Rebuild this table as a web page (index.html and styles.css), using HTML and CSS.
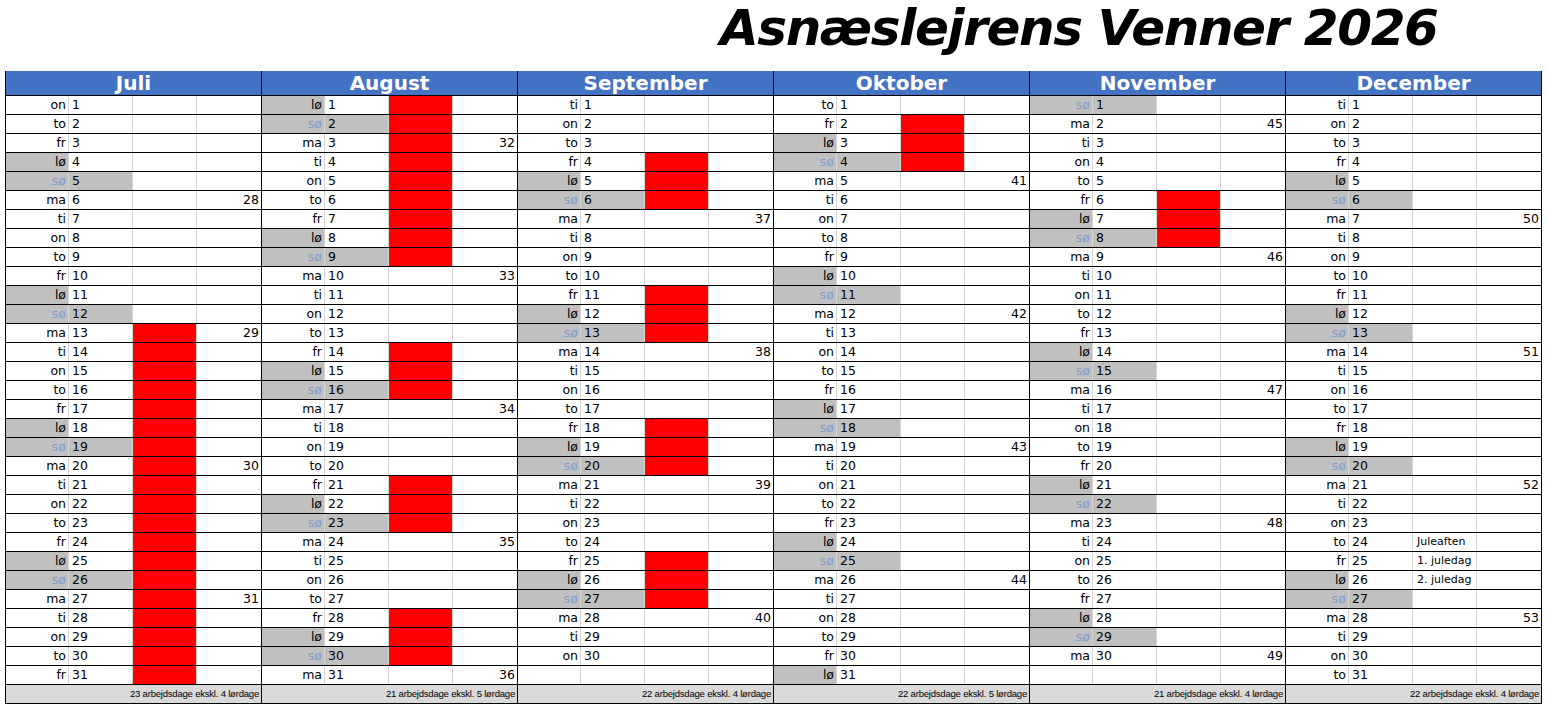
FILE: index.html
```html
<!DOCTYPE html>
<html lang="da">
<head>
<meta charset="utf-8">
<title>Asnæslejrens Venner 2026</title>
<link rel="stylesheet" href="styles.css">
</head>
<body>
<div class="title">Asnæslejrens Venner 2026</div>
<div class="cal">
<div class="m">
<div class="h">Juli</div>
<div class="r"><span>on</span><span>1</span><span></span><span></span></div>
<div class="r"><span>to</span><span>2</span><span></span><span></span></div>
<div class="r"><span>fr</span><span>3</span><span></span><span></span></div>
<div class="r sat"><span>lø</span><span>4</span><span></span><span></span></div>
<div class="r sun"><span>sø</span><span>5</span><span></span><span></span></div>
<div class="r"><span>ma</span><span>6</span><span></span><span>28</span></div>
<div class="r"><span>ti</span><span>7</span><span></span><span></span></div>
<div class="r"><span>on</span><span>8</span><span></span><span></span></div>
<div class="r"><span>to</span><span>9</span><span></span><span></span></div>
<div class="r"><span>fr</span><span>10</span><span></span><span></span></div>
<div class="r sat"><span>lø</span><span>11</span><span></span><span></span></div>
<div class="r sun"><span>sø</span><span>12</span><span></span><span></span></div>
<div class="r"><span>ma</span><span>13</span><span class="red"></span><span>29</span></div>
<div class="r"><span>ti</span><span>14</span><span class="red"></span><span></span></div>
<div class="r"><span>on</span><span>15</span><span class="red"></span><span></span></div>
<div class="r"><span>to</span><span>16</span><span class="red"></span><span></span></div>
<div class="r"><span>fr</span><span>17</span><span class="red"></span><span></span></div>
<div class="r sat"><span>lø</span><span>18</span><span class="red"></span><span></span></div>
<div class="r sun"><span>sø</span><span>19</span><span class="red"></span><span></span></div>
<div class="r"><span>ma</span><span>20</span><span class="red"></span><span>30</span></div>
<div class="r"><span>ti</span><span>21</span><span class="red"></span><span></span></div>
<div class="r"><span>on</span><span>22</span><span class="red"></span><span></span></div>
<div class="r"><span>to</span><span>23</span><span class="red"></span><span></span></div>
<div class="r"><span>fr</span><span>24</span><span class="red"></span><span></span></div>
<div class="r sat"><span>lø</span><span>25</span><span class="red"></span><span></span></div>
<div class="r sun"><span>sø</span><span>26</span><span class="red"></span><span></span></div>
<div class="r"><span>ma</span><span>27</span><span class="red"></span><span>31</span></div>
<div class="r"><span>ti</span><span>28</span><span class="red"></span><span></span></div>
<div class="r"><span>on</span><span>29</span><span class="red"></span><span></span></div>
<div class="r"><span>to</span><span>30</span><span class="red"></span><span></span></div>
<div class="r"><span>fr</span><span>31</span><span class="red"></span><span></span></div>
<div class="f">23 arbejdsdage ekskl. 4 lørdage</div>
</div>
<div class="m">
<div class="h">August</div>
<div class="r sat"><span>lø</span><span>1</span><span class="red"></span><span></span></div>
<div class="r sun"><span>sø</span><span>2</span><span class="red"></span><span></span></div>
<div class="r"><span>ma</span><span>3</span><span class="red"></span><span>32</span></div>
<div class="r"><span>ti</span><span>4</span><span class="red"></span><span></span></div>
<div class="r"><span>on</span><span>5</span><span class="red"></span><span></span></div>
<div class="r"><span>to</span><span>6</span><span class="red"></span><span></span></div>
<div class="r"><span>fr</span><span>7</span><span class="red"></span><span></span></div>
<div class="r sat"><span>lø</span><span>8</span><span class="red"></span><span></span></div>
<div class="r sun"><span>sø</span><span>9</span><span class="red"></span><span></span></div>
<div class="r"><span>ma</span><span>10</span><span></span><span>33</span></div>
<div class="r"><span>ti</span><span>11</span><span></span><span></span></div>
<div class="r"><span>on</span><span>12</span><span></span><span></span></div>
<div class="r"><span>to</span><span>13</span><span></span><span></span></div>
<div class="r"><span>fr</span><span>14</span><span class="red"></span><span></span></div>
<div class="r sat"><span>lø</span><span>15</span><span class="red"></span><span></span></div>
<div class="r sun"><span>sø</span><span>16</span><span class="red"></span><span></span></div>
<div class="r"><span>ma</span><span>17</span><span></span><span>34</span></div>
<div class="r"><span>ti</span><span>18</span><span></span><span></span></div>
<div class="r"><span>on</span><span>19</span><span></span><span></span></div>
<div class="r"><span>to</span><span>20</span><span></span><span></span></div>
<div class="r"><span>fr</span><span>21</span><span class="red"></span><span></span></div>
<div class="r sat"><span>lø</span><span>22</span><span class="red"></span><span></span></div>
<div class="r sun"><span>sø</span><span>23</span><span class="red"></span><span></span></div>
<div class="r"><span>ma</span><span>24</span><span></span><span>35</span></div>
<div class="r"><span>ti</span><span>25</span><span></span><span></span></div>
<div class="r"><span>on</span><span>26</span><span></span><span></span></div>
<div class="r"><span>to</span><span>27</span><span></span><span></span></div>
<div class="r"><span>fr</span><span>28</span><span class="red"></span><span></span></div>
<div class="r sat"><span>lø</span><span>29</span><span class="red"></span><span></span></div>
<div class="r sun"><span>sø</span><span>30</span><span class="red"></span><span></span></div>
<div class="r"><span>ma</span><span>31</span><span></span><span>36</span></div>
<div class="f">21 arbejdsdage ekskl. 5 lørdage</div>
</div>
<div class="m">
<div class="h">September</div>
<div class="r"><span>ti</span><span>1</span><span></span><span></span></div>
<div class="r"><span>on</span><span>2</span><span></span><span></span></div>
<div class="r"><span>to</span><span>3</span><span></span><span></span></div>
<div class="r"><span>fr</span><span>4</span><span class="red"></span><span></span></div>
<div class="r sat"><span>lø</span><span>5</span><span class="red"></span><span></span></div>
<div class="r sun"><span>sø</span><span>6</span><span class="red"></span><span></span></div>
<div class="r"><span>ma</span><span>7</span><span></span><span>37</span></div>
<div class="r"><span>ti</span><span>8</span><span></span><span></span></div>
<div class="r"><span>on</span><span>9</span><span></span><span></span></div>
<div class="r"><span>to</span><span>10</span><span></span><span></span></div>
<div class="r"><span>fr</span><span>11</span><span class="red"></span><span></span></div>
<div class="r sat"><span>lø</span><span>12</span><span class="red"></span><span></span></div>
<div class="r sun"><span>sø</span><span>13</span><span class="red"></span><span></span></div>
<div class="r"><span>ma</span><span>14</span><span></span><span>38</span></div>
<div class="r"><span>ti</span><span>15</span><span></span><span></span></div>
<div class="r"><span>on</span><span>16</span><span></span><span></span></div>
<div class="r"><span>to</span><span>17</span><span></span><span></span></div>
<div class="r"><span>fr</span><span>18</span><span class="red"></span><span></span></div>
<div class="r sat"><span>lø</span><span>19</span><span class="red"></span><span></span></div>
<div class="r sun"><span>sø</span><span>20</span><span class="red"></span><span></span></div>
<div class="r"><span>ma</span><span>21</span><span></span><span>39</span></div>
<div class="r"><span>ti</span><span>22</span><span></span><span></span></div>
<div class="r"><span>on</span><span>23</span><span></span><span></span></div>
<div class="r"><span>to</span><span>24</span><span></span><span></span></div>
<div class="r"><span>fr</span><span>25</span><span class="red"></span><span></span></div>
<div class="r sat"><span>lø</span><span>26</span><span class="red"></span><span></span></div>
<div class="r sun"><span>sø</span><span>27</span><span class="red"></span><span></span></div>
<div class="r"><span>ma</span><span>28</span><span></span><span>40</span></div>
<div class="r"><span>ti</span><span>29</span><span></span><span></span></div>
<div class="r"><span>on</span><span>30</span><span></span><span></span></div>
<div class="r"><span></span><span></span><span></span><span></span></div>
<div class="f">22 arbejdsdage ekskl. 4 lørdage</div>
</div>
<div class="m">
<div class="h">Oktober</div>
<div class="r"><span>to</span><span>1</span><span></span><span></span></div>
<div class="r"><span>fr</span><span>2</span><span class="red"></span><span></span></div>
<div class="r sat"><span>lø</span><span>3</span><span class="red"></span><span></span></div>
<div class="r sun"><span>sø</span><span>4</span><span class="red"></span><span></span></div>
<div class="r"><span>ma</span><span>5</span><span></span><span>41</span></div>
<div class="r"><span>ti</span><span>6</span><span></span><span></span></div>
<div class="r"><span>on</span><span>7</span><span></span><span></span></div>
<div class="r"><span>to</span><span>8</span><span></span><span></span></div>
<div class="r"><span>fr</span><span>9</span><span></span><span></span></div>
<div class="r sat"><span>lø</span><span>10</span><span></span><span></span></div>
<div class="r sun"><span>sø</span><span>11</span><span></span><span></span></div>
<div class="r"><span>ma</span><span>12</span><span></span><span>42</span></div>
<div class="r"><span>ti</span><span>13</span><span></span><span></span></div>
<div class="r"><span>on</span><span>14</span><span></span><span></span></div>
<div class="r"><span>to</span><span>15</span><span></span><span></span></div>
<div class="r"><span>fr</span><span>16</span><span></span><span></span></div>
<div class="r sat"><span>lø</span><span>17</span><span></span><span></span></div>
<div class="r sun"><span>sø</span><span>18</span><span></span><span></span></div>
<div class="r"><span>ma</span><span>19</span><span></span><span>43</span></div>
<div class="r"><span>ti</span><span>20</span><span></span><span></span></div>
<div class="r"><span>on</span><span>21</span><span></span><span></span></div>
<div class="r"><span>to</span><span>22</span><span></span><span></span></div>
<div class="r"><span>fr</span><span>23</span><span></span><span></span></div>
<div class="r sat"><span>lø</span><span>24</span><span></span><span></span></div>
<div class="r sun"><span>sø</span><span>25</span><span></span><span></span></div>
<div class="r"><span>ma</span><span>26</span><span></span><span>44</span></div>
<div class="r"><span>ti</span><span>27</span><span></span><span></span></div>
<div class="r"><span>on</span><span>28</span><span></span><span></span></div>
<div class="r"><span>to</span><span>29</span><span></span><span></span></div>
<div class="r"><span>fr</span><span>30</span><span></span><span></span></div>
<div class="r sat"><span>lø</span><span>31</span><span></span><span></span></div>
<div class="f">22 arbejdsdage ekskl. 5 lørdage</div>
</div>
<div class="m">
<div class="h">November</div>
<div class="r sun"><span>sø</span><span>1</span><span></span><span></span></div>
<div class="r"><span>ma</span><span>2</span><span></span><span>45</span></div>
<div class="r"><span>ti</span><span>3</span><span></span><span></span></div>
<div class="r"><span>on</span><span>4</span><span></span><span></span></div>
<div class="r"><span>to</span><span>5</span><span></span><span></span></div>
<div class="r"><span>fr</span><span>6</span><span class="red"></span><span></span></div>
<div class="r sat"><span>lø</span><span>7</span><span class="red"></span><span></span></div>
<div class="r sun"><span>sø</span><span>8</span><span class="red"></span><span></span></div>
<div class="r"><span>ma</span><span>9</span><span></span><span>46</span></div>
<div class="r"><span>ti</span><span>10</span><span></span><span></span></div>
<div class="r"><span>on</span><span>11</span><span></span><span></span></div>
<div class="r"><span>to</span><span>12</span><span></span><span></span></div>
<div class="r"><span>fr</span><span>13</span><span></span><span></span></div>
<div class="r sat"><span>lø</span><span>14</span><span></span><span></span></div>
<div class="r sun"><span>sø</span><span>15</span><span></span><span></span></div>
<div class="r"><span>ma</span><span>16</span><span></span><span>47</span></div>
<div class="r"><span>ti</span><span>17</span><span></span><span></span></div>
<div class="r"><span>on</span><span>18</span><span></span><span></span></div>
<div class="r"><span>to</span><span>19</span><span></span><span></span></div>
<div class="r"><span>fr</span><span>20</span><span></span><span></span></div>
<div class="r sat"><span>lø</span><span>21</span><span></span><span></span></div>
<div class="r sun"><span>sø</span><span>22</span><span></span><span></span></div>
<div class="r"><span>ma</span><span>23</span><span></span><span>48</span></div>
<div class="r"><span>ti</span><span>24</span><span></span><span></span></div>
<div class="r"><span>on</span><span>25</span><span></span><span></span></div>
<div class="r"><span>to</span><span>26</span><span></span><span></span></div>
<div class="r"><span>fr</span><span>27</span><span></span><span></span></div>
<div class="r sat"><span>lø</span><span>28</span><span></span><span></span></div>
<div class="r sun"><span>sø</span><span>29</span><span></span><span></span></div>
<div class="r"><span>ma</span><span>30</span><span></span><span>49</span></div>
<div class="r"><span></span><span></span><span></span><span></span></div>
<div class="f">21 arbejdsdage ekskl. 4 lørdage</div>
</div>
<div class="m">
<div class="h">December</div>
<div class="r"><span>ti</span><span>1</span><span></span><span></span></div>
<div class="r"><span>on</span><span>2</span><span></span><span></span></div>
<div class="r"><span>to</span><span>3</span><span></span><span></span></div>
<div class="r"><span>fr</span><span>4</span><span></span><span></span></div>
<div class="r sat"><span>lø</span><span>5</span><span></span><span></span></div>
<div class="r sun"><span>sø</span><span>6</span><span></span><span></span></div>
<div class="r"><span>ma</span><span>7</span><span></span><span>50</span></div>
<div class="r"><span>ti</span><span>8</span><span></span><span></span></div>
<div class="r"><span>on</span><span>9</span><span></span><span></span></div>
<div class="r"><span>to</span><span>10</span><span></span><span></span></div>
<div class="r"><span>fr</span><span>11</span><span></span><span></span></div>
<div class="r sat"><span>lø</span><span>12</span><span></span><span></span></div>
<div class="r sun"><span>sø</span><span>13</span><span></span><span></span></div>
<div class="r"><span>ma</span><span>14</span><span></span><span>51</span></div>
<div class="r"><span>ti</span><span>15</span><span></span><span></span></div>
<div class="r"><span>on</span><span>16</span><span></span><span></span></div>
<div class="r"><span>to</span><span>17</span><span></span><span></span></div>
<div class="r"><span>fr</span><span>18</span><span></span><span></span></div>
<div class="r sat"><span>lø</span><span>19</span><span></span><span></span></div>
<div class="r sun"><span>sø</span><span>20</span><span></span><span></span></div>
<div class="r"><span>ma</span><span>21</span><span></span><span>52</span></div>
<div class="r"><span>ti</span><span>22</span><span></span><span></span></div>
<div class="r"><span>on</span><span>23</span><span></span><span></span></div>
<div class="r"><span>to</span><span>24</span><span class="note">Juleaften</span><span></span></div>
<div class="r"><span>fr</span><span>25</span><span class="note">1. juledag</span><span></span></div>
<div class="r sat"><span>lø</span><span>26</span><span class="note">2. juledag</span><span></span></div>
<div class="r sun"><span>sø</span><span>27</span><span></span><span></span></div>
<div class="r"><span>ma</span><span>28</span><span></span><span>53</span></div>
<div class="r"><span>ti</span><span>29</span><span></span><span></span></div>
<div class="r"><span>on</span><span>30</span><span></span><span></span></div>
<div class="r"><span>to</span><span>31</span><span></span><span></span></div>
<div class="f">22 arbejdsdage ekskl. 4 lørdage</div>
</div>
</div>
</body>
</html>
```
FILE: styles.css
```css
body {
  margin: 0;
  background: #fff;
  color: #000;
  font-family: "DejaVu Sans", Verdana, sans-serif;
}
.title {
  height: 71px;
  box-sizing: border-box;
  padding-left: 720px;
  font-family: "DejaVu Sans", Verdana, sans-serif;
  font-weight: bold;
  font-style: oblique;
  font-size: 50px;
  line-height: 56px;
  letter-spacing: -1.4px;
  white-space: nowrap;
}
.cal {
  display: flex;
  margin-left: 5px;
  border-left: 1px solid #000;
  width: max-content;
}
.m {
  width: 256px;
  box-sizing: border-box;
  border-right: 1px solid #000;
}
.h {
  height: 25px;
  box-sizing: border-box;
  background: #4472c4;
  color: #fff;
  font-weight: bold;
  font-size: 20px;
  line-height: 24px;
  text-align: center;
  border-bottom: 1px solid #000;
}
.r {
  display: flex;
  height: 19px;
  box-sizing: border-box;
  border-bottom: 1px solid #000;
  font-size: 12.5px;
  line-height: 18px;
}
.r span {
  box-sizing: border-box;
  height: 18px;
  border-right: 1px solid #d4d4d4;
  white-space: nowrap;
  overflow: hidden;
}
.r span:nth-child(1) {
  width: 63px;
  text-align: right;
  padding-right: 2px;
}
.r span:nth-child(2) {
  width: 64px;
  padding-left: 3px;
}
.r span:nth-child(3) {
  width: 64px;
}
.r span:nth-child(4) {
  width: 64px;
  border-right: 0;
  text-align: right;
  padding-right: 2px;
}
.sat span:nth-child(1),
.sun span:nth-child(1),
.sun span:nth-child(2) {
  background: #c0c0c0;
}
.sun span:nth-child(1) {
  color: #7b9fd0;
}
.r span.red {
  background: #ff0000;
}
.r span.note {
  font-size: 11px;
  padding-left: 4px;
}
.f {
  height: 19px;
  box-sizing: border-box;
  background: #d9d9d9;
  border-bottom: 1px solid #000;
  text-align: right;
  padding-right: 2px;
  font-family: "Liberation Sans", Arial, sans-serif;
  font-size: 9.5px;
  line-height: 18px;
  letter-spacing: -0.2px;
}
```
